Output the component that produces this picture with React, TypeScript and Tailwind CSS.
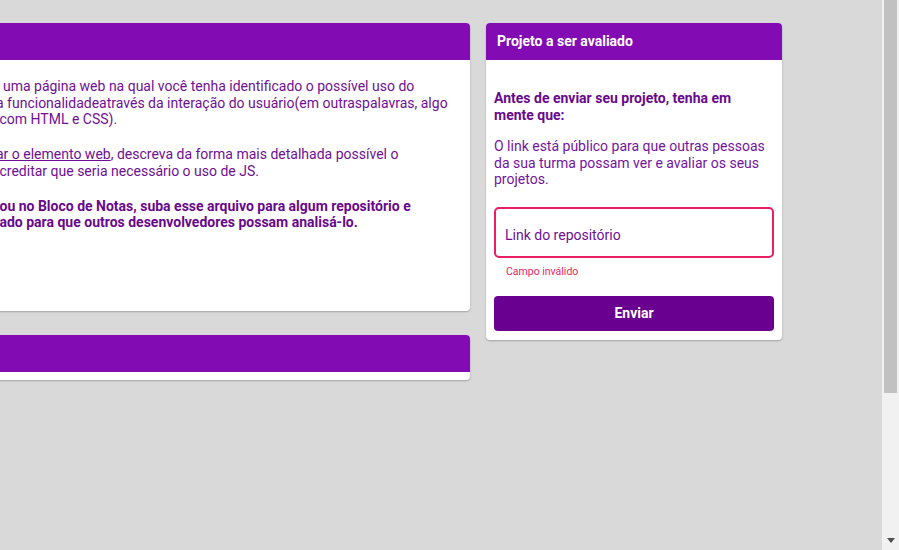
const font = { fontFamily: 'Roboto, "Liberation Sans", sans-serif' };

const CardHeader = ({ title }: { title?: string }) => (
    <div className="h-[37px] bg-[#820bb4] rounded-t-[4px] flex items-center px-[11px]">
        {title && <span className="text-white font-bold text-[14px]">{title}</span>}
    </div>
);

const Scrollbar = () => (
    <div className="w-[17px] h-full bg-[#f1f1f1] flex flex-col items-center">
        <div className="w-[13px] h-[393px] bg-[#c1c1c1]" />
        <div className="flex-1" />
        <div className="mb-[7px] w-0 h-0 border-l-[4px] border-r-[4px] border-t-[5px] border-l-transparent border-r-transparent border-t-[#505050]" />
    </div>
);

export default function App() {
    return (
        <div className="w-[899px] h-[550px] flex overflow-hidden" style={font}>
            <main className="flex-1 bg-[#d9d9d9] overflow-hidden">
                <div className="flex items-start gap-4 pt-[23px]">
                    <div className="-ml-5 w-[490px] shrink-0 flex flex-col gap-6">
                        <section className="bg-white rounded-[4px] shadow-[0_1px_2px_rgba(0,0,0,0.25)] h-[288px]">
                            <CardHeader />
                            <div className="pl-4 pr-3 pt-[18px] text-[14px] leading-[16.5px] text-[#6e0f96] whitespace-nowrap">
                                <p className="mb-[18.5px]">
                                    {'\u00a0\u00a0'}uma página web na qual você tenha identificado o possível uso do<br />
                                    a funcionalidadeatravés da interação do usuário(em outraspalavras, algo<br />
                                    {'\u00a0'}com HTML e CSS).
                                </p>
                                <p className="mb-[18.5px]">
                                    <a href="#" className="underline text-[#6e0f96]">ar o elemento web</a>, descreva da forma mais detalhada possível o<br />
                                    {'\u00a0'}creditar que seria necessário o uso de JS.
                                </p>
                                <p className="font-bold text-[#68088c]">
                                    {'\u00a0'}ou no Bloco de Notas, suba esse arquivo para algum repositório e<br />
                                    {'\u00a0'}ado para que outros desenvolvedores possam analisá-lo.
                                </p>
                            </div>
                        </section>
                        <section className="bg-white rounded-[4px] shadow-[0_1px_2px_rgba(0,0,0,0.25)] pb-2">
                            <CardHeader />
                        </section>
                    </div>

                    <aside className="w-[296px] shrink-0 bg-white rounded-[4px] shadow-[0_1px_2px_rgba(0,0,0,0.25)]">
                        <CardHeader title="Projeto a ser avaliado" />
                        <div className="px-2 pt-[30px] pb-[9px]">
                            <h3 className="font-bold text-[14px] leading-[16.5px] text-[#68088c]">
                                Antes de enviar seu projeto, tenha em mente que:
                            </h3>
                            <p className="mt-[15px] text-[14px] leading-[16.5px] text-[#7314a0]">
                                O link está público para que outras pessoas da sua turma possam ver e avaliar os seus projetos.
                            </p>
                            <input
                                type="text"
                                placeholder="Link do repositório"
                                className="mt-[19px] w-full h-[51px] border-2 border-[#e91e63] rounded-[5px] px-[9px] pt-[5px] text-[14px] outline-none placeholder:text-[#6e0f96]"
                            />
                            <p className="mt-[7px] ml-3 text-[10.5px] leading-[13px] text-[#e91e63]">Campo inválido</p>
                            <button className="mt-[18px] w-full h-[35px] bg-[#690090] rounded-[4px] text-white font-bold text-[14px]">
                                Enviar
                            </button>
                        </div>
                    </aside>
                </div>
            </main>
            <Scrollbar />
        </div>
    );
}
